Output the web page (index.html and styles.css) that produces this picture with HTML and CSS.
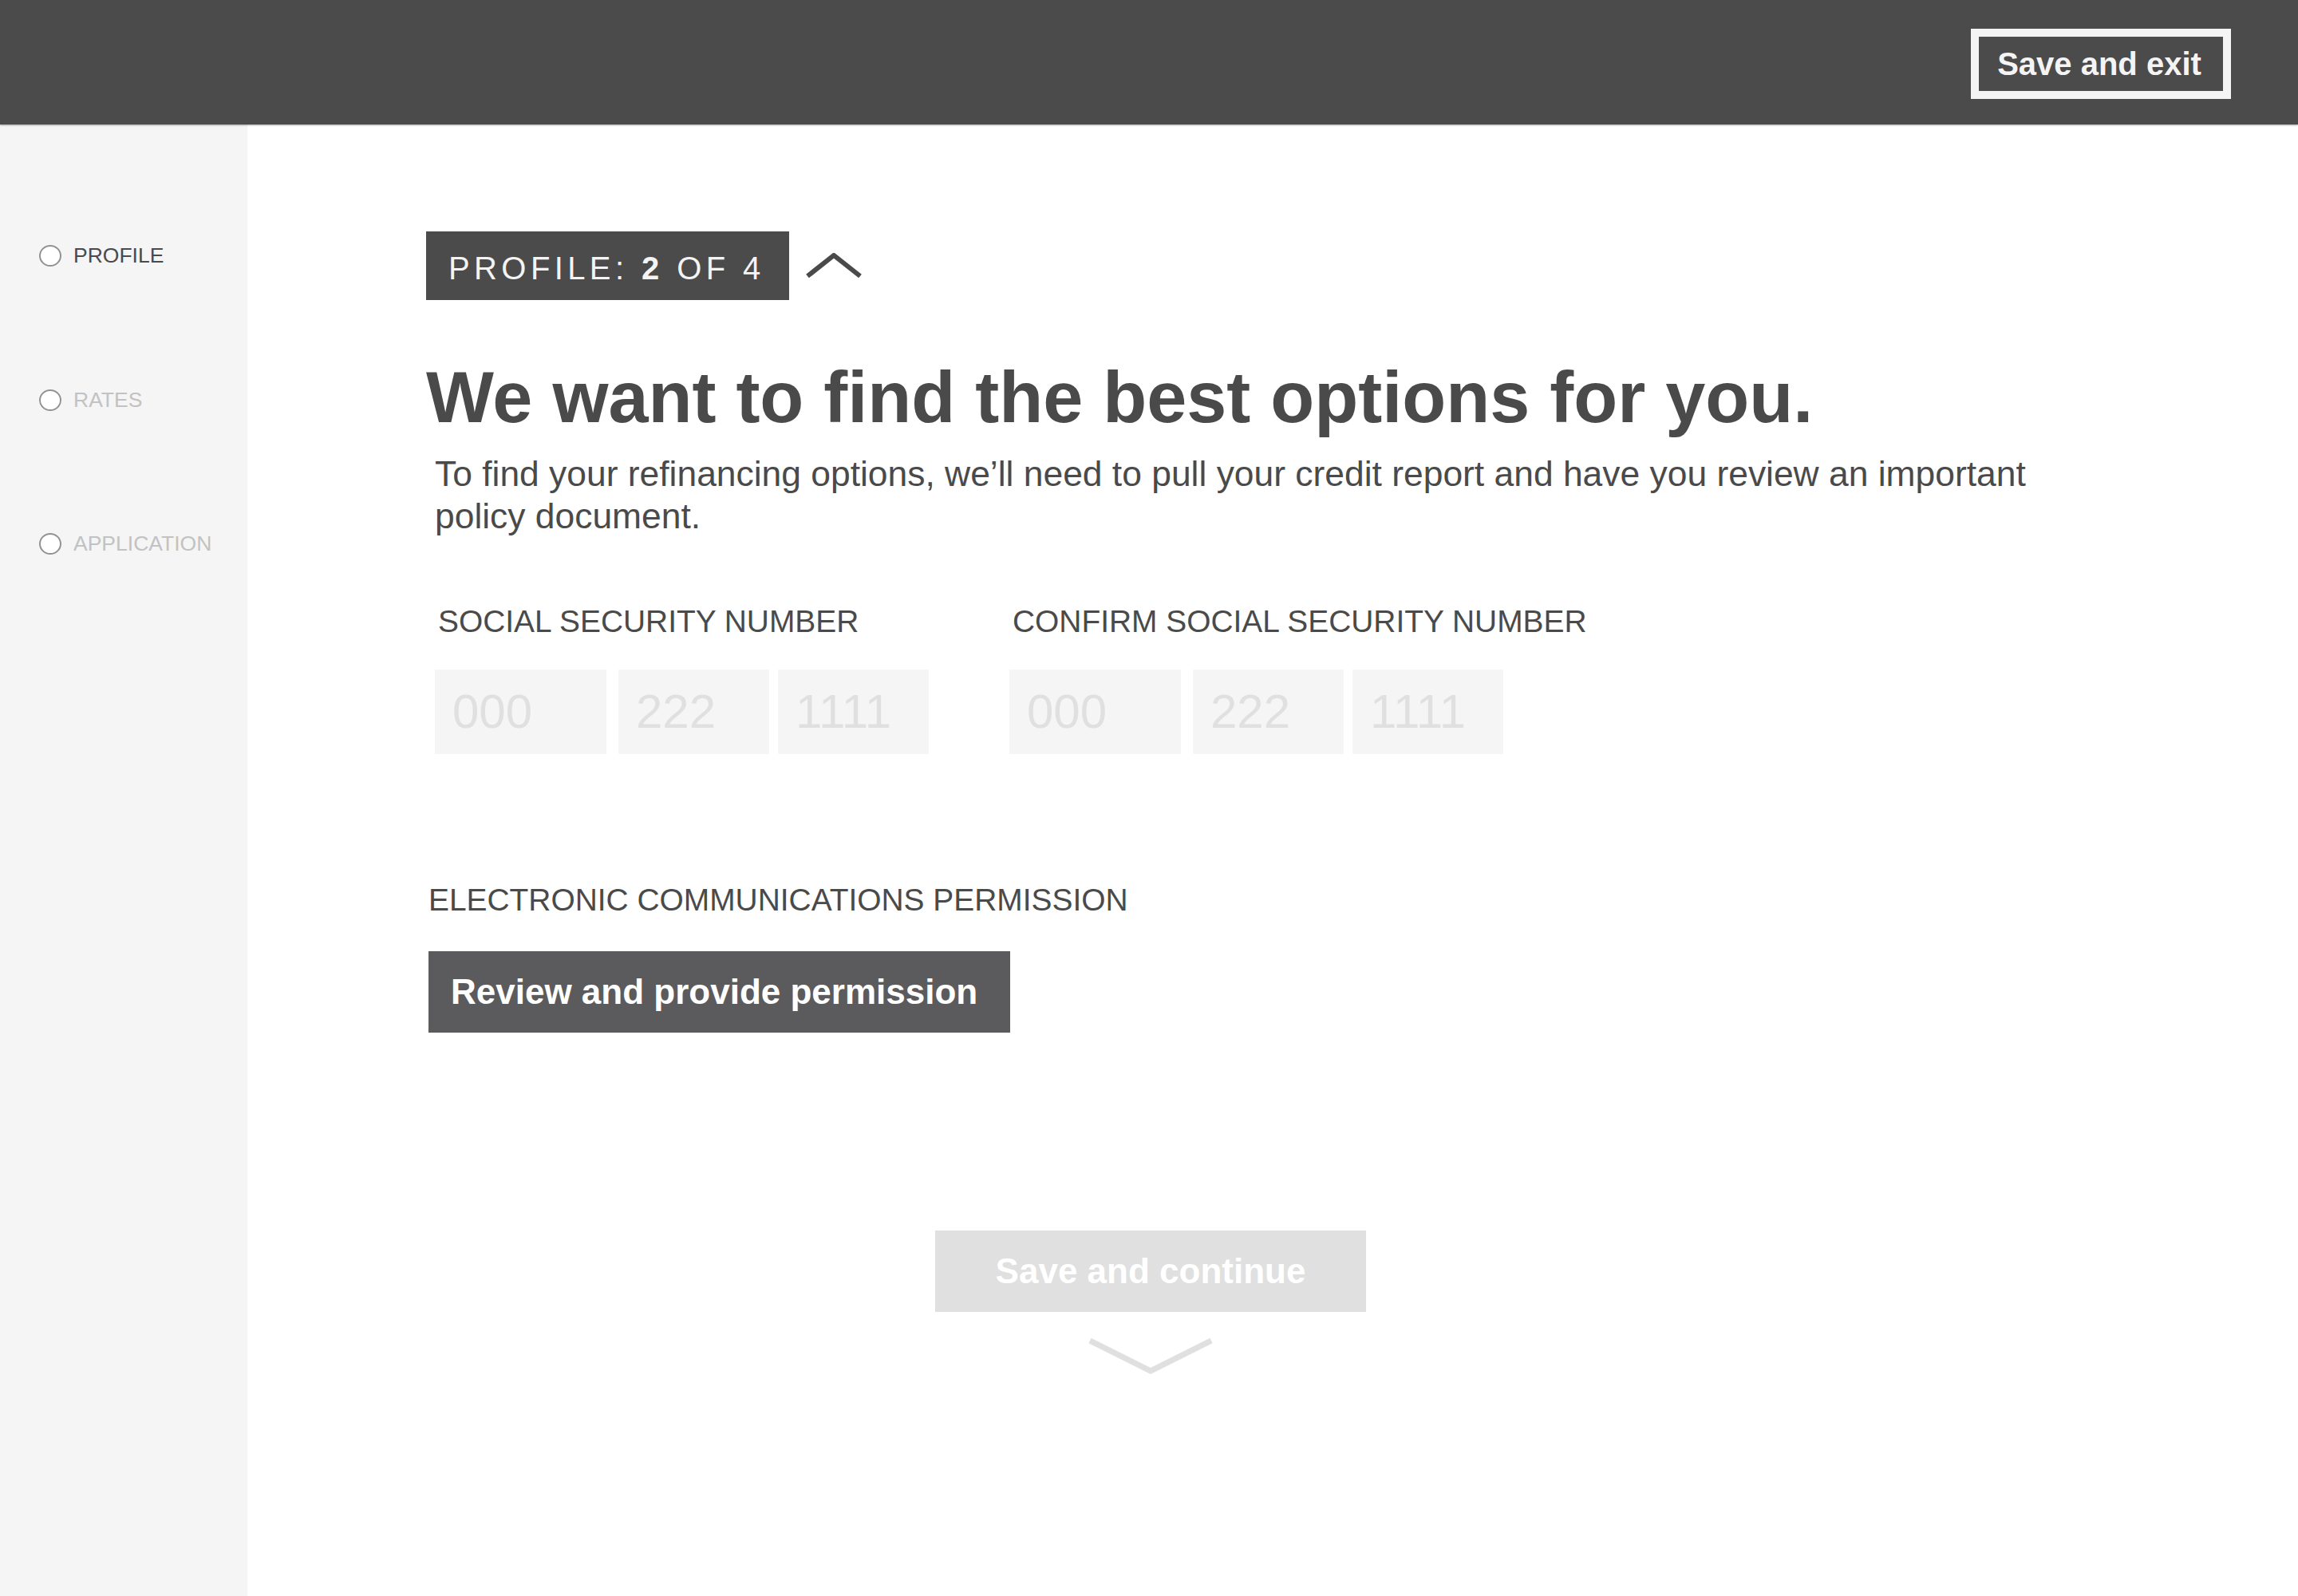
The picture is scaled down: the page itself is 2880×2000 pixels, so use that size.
FILE: index.html
```html
<!DOCTYPE html>
<html lang="en">
<head>
    <meta charset="UTF-8">
    <meta name="viewport" content="width=device-width, initial-scale=1.0">
    <title>Profile - Refinance</title>

    <link rel="stylesheet" href="styles.css">

</head>
<body>
    <header class="topbar">
        <button type="button" class="exitBtn">Save and exit</button>
    </header>

    <div class="layout">
        <nav class="sidebar">
            <div class="navItem active"><span class="dot"></span>PROFILE</div>
            <div class="navItem"><span class="dot"></span>RATES</div>
            <div class="navItem"><span class="dot"></span>APPLICATION</div>
        </nav>

        <main class="content">
            <div class="stepRow">
                <div class="stepBadge">PROFILE: <b>2</b> OF 4</div>
                <svg class="chevUp" width="70" height="32" viewBox="0 0 70 32">
                    <polyline points="2,29 35,3 68,29" fill="none" stroke="#4a4a4a" stroke-width="6"/>
                </svg>
            </div>

            <h1 class="title">We want to find the best options for you.</h1>
            <p class="intro">To find your refinancing options, we’ll need to pull your credit report and have you review an important policy document.</p>

            <div class="ssn">
                <div class="ssnCol">
                    <div class="fieldLabel">SOCIAL SECURITY NUMBER</div>
                    <div class="ssnInputs">
                        <input type="text" class="seg seg1" placeholder="000">
                        <input type="text" class="seg seg2" placeholder="222">
                        <input type="text" class="seg" placeholder="1111">
                    </div>
                </div>
                <div class="ssnCol">
                    <div class="fieldLabel">CONFIRM SOCIAL SECURITY NUMBER</div>
                    <div class="ssnInputs">
                        <input type="text" class="seg seg1" placeholder="000">
                        <input type="text" class="seg seg2" placeholder="222">
                        <input type="text" class="seg" placeholder="1111">
                    </div>
                </div>
            </div>

            <div class="permission">
                <div class="fieldLabel plain">ELECTRONIC COMMUNICATIONS PERMISSION</div>
                <button type="button" class="reviewBtn">Review and provide permission</button>
            </div>

            <div class="actions">
                <button type="button" class="continueBtn" disabled>Save and continue</button>
                <svg class="chevDown" width="156" height="46" viewBox="0 0 156 46">
                    <polyline points="2,4 78,42 154,4" fill="none" stroke="#e0e0e0" stroke-width="7"/>
                </svg>
            </div>
        </main>
    </div>
</body>
</html>
```

FILE: styles.css
```css
body{
    margin: 0;
    font-family: "Helvetica Neue", "Liberation Sans", Arial, sans-serif;
    color: #4a4a4a;
    background-color: #fff;
}
button{
    font-family: inherit;
    border: none;
    cursor: pointer;
}

/* top bar */
.topbar{
    height: 156px;
    background-color: #4b4b4b;
    box-shadow: 0 1px 2px rgba(0, 0, 0, 0.35);
    display: flex;
    justify-content: flex-end;
    align-items: flex-start;
    padding: 36px 84px 0 0;
    box-sizing: border-box;
    position: relative;
    z-index: 1;
}
.exitBtn{
    width: 326px;
    height: 88px;
    border: 10px solid #f4f4f4;
    background-color: #4b4b4b;
    color: #f4f4f4;
    font-size: 40px;
    font-weight: bold;
    line-height: 68px;
    padding: 0 4px 0 0;
}

.layout{
    display: flex;
    min-height: calc(100vh - 156px);
}

/* left steps */
.sidebar{
    width: 310px;
    flex-shrink: 0;
    background-color: #f5f5f5;
    padding: 151px 0 0 49px;
    box-sizing: border-box;
    display: flex;
    flex-direction: column;
    gap: 153.5px;
}
.navItem{
    display: flex;
    align-items: center;
    gap: 15px;
    height: 27px;
    line-height: 27px;
    font-size: 26.5px;
    color: #c2c2c2;
}
.navItem.active{
    color: #4a4a4a;
}
.dot{
    width: 28px;
    height: 27px;
    border-radius: 50%;
    border: 2px solid #929292;
    background-color: #fff;
    box-sizing: border-box;
    flex-shrink: 0;
}

/* main form */
.content{
    flex: 1;
    padding: 134px 0 0 224px;
}
.stepRow{
    display: flex;
    align-items: center;
    margin-bottom: 77px;
}
.stepBadge{
    background-color: #4b4b4b;
    color: #f4f4f4;
    font-size: 40px;
    letter-spacing: 5.4px;
    line-height: 80px;
    height: 86px;
    box-sizing: border-box;
    padding: 6px 30px 0 28px;
}
.stepBadge b{
    font-weight: bold;
}
.chevUp{
    margin-left: 21px;
}
.title{
    margin: 0 0 24px;
    font-size: 90px;
    line-height: 90px;
    font-weight: bold;
    white-space: nowrap;
}
.intro{
    margin: 0 0 83px 11px;
    max-width: 2060px;
    font-size: 44.4px;
    line-height: 53px;
}

.ssn{
    display: grid;
    grid-template-columns: 720px 720px;
    margin-left: 11px;
}
.fieldLabel{
    font-size: 38.9px;
    line-height: 46px;
    padding-left: 4px;
    margin-bottom: 37px;
    white-space: nowrap;
}
.ssnInputs{
    display: flex;
}
.seg{
    width: 189px;
    height: 106px;
    border: none;
    outline: none;
    background-color: #f5f5f5;
    font-family: inherit;
    font-size: 60px;
    line-height: 106px;
    color: #4a4a4a;
    padding: 0 0 0 22px;
    box-sizing: border-box;
}
.seg::placeholder{
    color: #e0e0e0;
}
.seg1{
    width: 215px;
    margin-right: 15px;
}
.seg2{
    margin-right: 11px;
}

.permission{
    margin: 160px 0 0 3px;
}
.permission .fieldLabel.plain{
    padding-left: 0;
    margin-bottom: 41px;
}
.reviewBtn{
    height: 102px;
    padding: 0 41px 0 28px;
    background-color: #5b5b5d;
    color: #fff;
    font-size: 44px;
    font-weight: bold;
}

.actions{
    width: 1816px;
    margin-top: 248px;
    display: flex;
    flex-direction: column;
    align-items: center;
}
.continueBtn{
    width: 540px;
    height: 102px;
    background-color: #e0e0e0;
    color: #fff;
    font-size: 44px;
    font-weight: bold;
    cursor: default;
}
.chevDown{
    margin-top: 32px;
}
```
